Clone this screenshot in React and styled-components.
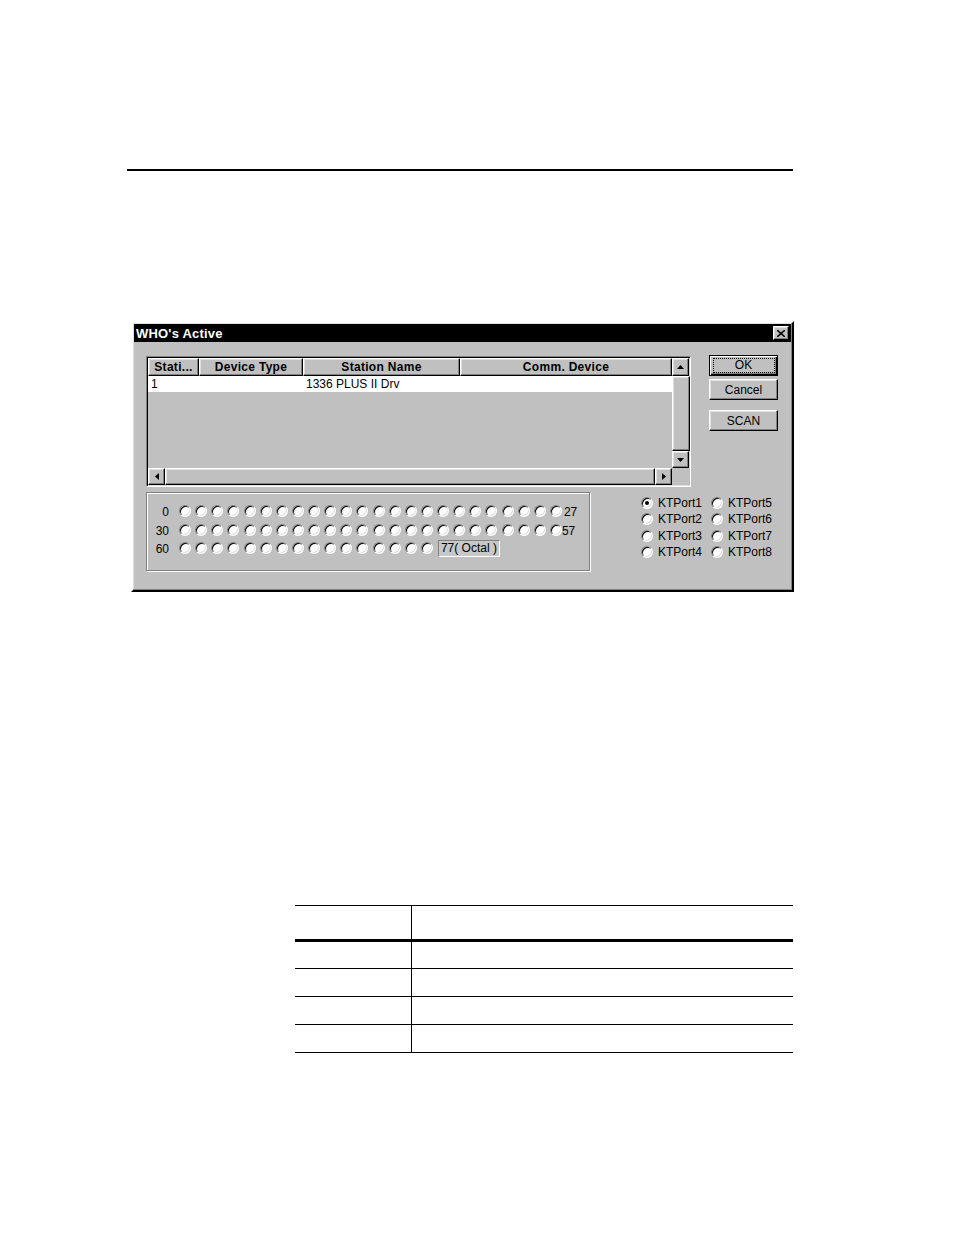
import React from "react";
import styled, { createGlobalStyle, css } from "styled-components";

const GlobalStyle = createGlobalStyle`
  html, body {
    margin: 0;
    padding: 0;
    background: #ffffff;
  }
  body {
    font-family: "Liberation Sans", Arial, sans-serif;
    font-size: 12px;
    color: #000;
  }
`;

const raised = css`
  border-style: solid;
  border-width: 1px;
  border-color: #ffffff #000000 #000000 #ffffff;
  box-shadow: inset -1px -1px #808080, inset 1px 1px #dfdfdf;
`;

const Page = styled.div`
  width: 954px;
  height: 1235px;
  padding-top: 169px;
  box-sizing: border-box;
  overflow: hidden;
`;

const Rule = styled.div`
  margin-left: 127px;
  width: 666px;
  height: 2px;
  background: #000;
`;

const Dialog = styled.div`
  margin-top: 150px;
  margin-left: 131px;
  width: 663px;
  height: 271px;
  box-sizing: border-box;
  background: #c0c0c0;
  padding: 1px;
  ${raised};
  border-width: 2px;
  display: flex;
  flex-direction: column;
`;

const TitleBar = styled.div`
  height: 18px;
  background: #000;
  color: #fff;
  display: flex;
  align-items: center;
  justify-content: space-between;
  padding: 0 2px 0 2px;
`;

const Title = styled.span`
  font-weight: bold;
  font-size: 13px;
  letter-spacing: 0.2px;
`;

const CloseButton = styled.div`
  width: 16px;
  height: 14px;
  box-sizing: border-box;
  background: #c0c0c0;
  ${raised};
  display: flex;
  align-items: center;
  justify-content: center;
`;

const Body = styled.div`
  padding: 14px 0 0 12px;
  display: flex;
  flex-direction: column;
`;

const TopRow = styled.div`
  display: flex;
  align-items: flex-start;
`;

const ListFrame = styled.div`
  width: 545px;
  height: 131px;
  box-sizing: border-box;
  border-style: solid;
  border-width: 1px;
  border-color: #808080 #ffffff #ffffff #808080;
  box-shadow: inset 1px 1px #000, inset -1px -1px #dfdfdf;
  padding: 1px;
  background: #c0c0c0;
  display: grid;
  grid-template-columns: 524px 18px;
  grid-template-rows: 110px 17px;
`;

const ListContent = styled.div`
  display: flex;
  flex-direction: column;
  overflow: hidden;
`;

const HeaderRow = styled.div`
  display: flex;
  height: 18px;
`;

const HeaderCell = styled.div`
  width: ${(p) => p.$w}px;
  box-sizing: border-box;
  ${raised};
  background: #c0c0c0;
  font-weight: bold;
  font-size: 12px;
  display: flex;
  align-items: center;
  justify-content: center;
  white-space: nowrap;
  overflow: hidden;
  letter-spacing: 0.3px;
`;

const DataRow = styled.div`
  display: flex;
  height: 16px;
  background: #fff;
`;

const DataCell = styled.div`
  width: ${(p) => p.$w}px;
  padding-left: 3px;
  box-sizing: border-box;
  line-height: 16px;
  white-space: nowrap;
`;

const ScrollButton = styled.div`
  width: ${(p) => p.$w || 17}px;
  height: ${(p) => p.$h || 17}px;
  flex: none;
  box-sizing: border-box;
  background: #c0c0c0;
  ${raised};
  display: flex;
  align-items: center;
  justify-content: center;
`;

const VScroll = styled.div`
  display: flex;
  flex-direction: column;
  background: #d0d0d0;
`;

const HScroll = styled.div`
  display: flex;
  background: #d0d0d0;
`;

const Thumb = styled.div`
  flex: 1;
  box-sizing: border-box;
  background: #c0c0c0;
  ${raised};
`;

const Corner = styled.div`
  background: #c0c0c0;
`;

const ButtonColumn = styled.div`
  margin-left: 18px;
  margin-top: -1px;
  display: flex;
  flex-direction: column;
`;

const Button = styled.div`
  width: 69px;
  height: 21px;
  box-sizing: border-box;
  background: #c0c0c0;
  ${raised};
  display: flex;
  align-items: center;
  justify-content: center;
  margin-bottom: ${(p) => p.$gap || 0}px;
  ${(p) =>
    p.$default &&
    css`
      border: 1px solid #000;
      box-shadow: inset 1px 1px #fff, inset -1px -1px #000,
        inset -2px -2px #808080;
    `}
`;

const FocusText = styled.span`
  display: inline-block;
  width: 60px;
  height: 13px;
  line-height: 13px;
  text-align: center;
  border: 1px dotted #000;
`;

const BottomRow = styled.div`
  display: flex;
  margin-top: 5px;
  align-items: flex-start;
`;

const GroupBox = styled.div`
  width: 444px;
  height: 79px;
  box-sizing: border-box;
  border: 1px solid #808080;
  box-shadow: inset 1px 1px #fff, 1px 1px #fff;
  padding: 12px 0 0 1px;
  display: flex;
  flex-direction: column;
  gap: 6.5px;
`;

const StationRow = styled.div`
  display: flex;
  align-items: center;
  height: 12px;
`;

const RowLabel = styled.span`
  width: 21px;
  text-align: right;
  margin-right: 10px;
  line-height: 12px;
  padding-top: 2px;
`;

const Radios = styled.div`
  display: flex;
  gap: 4.13px;
`;

const Radio = styled.span`
  display: inline-block;
  width: 12px;
  height: 12px;
  flex: none;
  box-sizing: border-box;
  border-radius: 50%;
  border: 1px solid;
  border-color: #808080 #ffffff #ffffff #808080;
  box-shadow: inset 1px 1px #000, inset -1px -1px #dfdfdf;
  background: #fff;
  position: relative;
  ${(p) =>
    p.$checked &&
    css`
      &::after {
        content: "";
        position: absolute;
        left: 3px;
        top: 3px;
        width: 4px;
        height: 4px;
        border-radius: 50%;
        background: #000;
      }
    `}
`;

const EndLabel = styled.span`
  margin-left: ${(p) => p.$gap}px;
  line-height: 12px;
  padding-top: 2px;
`;

const OctalBox = styled.span`
  margin-left: 5px;
  height: 17px;
  padding: 0 2px;
  box-sizing: border-box;
  border: 1px solid;
  border-color: #808080 #ffffff #ffffff #808080;
  background: #c8c8c8;
  line-height: 15px;
`;

const PortGrid = styled.div`
  margin-left: 51px;
  margin-top: 3px;
  display: grid;
  grid-template-columns: 70px 70px;
  grid-auto-flow: column;
  grid-template-rows: repeat(4, 16.3px);
`;

const Port = styled.label`
  display: flex;
  align-items: center;
  gap: 5px;
  white-space: nowrap;
`;

const Table = styled.div`
  margin-top: 313px;
  margin-left: 295px;
  width: 498px;
  border-top: 1px solid #000;
`;

const TableRow = styled.div`
  display: grid;
  grid-template-columns: 117px 1fr;
  height: ${(p) => p.$h}px;
  border-bottom: ${(p) => p.$b}px solid #000;
  box-sizing: border-box;
`;

const TableCell = styled.div`
  border-right: ${(p) => (p.$first ? "1px solid #000" : "none")};
`;

const Arrow = ({ dir }) => {
  const pts = {
    up: "0,4 7,4 3.5,0",
    down: "0,0 7,0 3.5,4",
    left: "4,0 4,7 0,3.5",
    right: "0,0 0,7 4,3.5",
  }[dir];
  const vertical = dir === "up" || dir === "down";
  return (
    <svg width={vertical ? 7 : 4} height={vertical ? 4 : 7}>
      <polygon points={pts} fill="#000" />
    </svg>
  );
};

const columns = [
  { title: "Stati...", w: 51 },
  { title: "Device Type", w: 104 },
  { title: "Station Name", w: 157 },
  { title: "Comm. Device", w: 212 },
];

const tableRows = [
  { h: 36, b: 3 },
  { h: 27, b: 1 },
  { h: 28, b: 1 },
  { h: 28, b: 1 },
  { h: 28, b: 1 },
];

const App = () => {
  const row = (n) => Array.from({ length: n }, (_, i) => <Radio key={i} />);
  return (
    <Page>
      <GlobalStyle />
      <Rule />
      <Dialog>
        <TitleBar>
          <Title>WHO's Active</Title>
          <CloseButton>
            <svg width="8" height="7" viewBox="0 0 8 7">
              <path d="M0 0 L8 7 M8 0 L0 7" stroke="#000" strokeWidth="1.6" />
            </svg>
          </CloseButton>
        </TitleBar>
        <Body>
          <TopRow>
            <ListFrame>
              <ListContent>
                <HeaderRow>
                  {columns.map((c) => (
                    <HeaderCell key={c.title} $w={c.w}>
                      {c.title}
                    </HeaderCell>
                  ))}
                </HeaderRow>
                <DataRow>
                  <DataCell $w={155}>1</DataCell>
                  <DataCell $w={369}>1336 PLUS II Drv</DataCell>
                </DataRow>
              </ListContent>
              <VScroll>
                <ScrollButton $h={18}>
                  <Arrow dir="up" />
                </ScrollButton>
                <Thumb />
                <ScrollButton>
                  <Arrow dir="down" />
                </ScrollButton>
              </VScroll>
              <HScroll>
                <ScrollButton>
                  <Arrow dir="left" />
                </ScrollButton>
                <Thumb />
                <ScrollButton>
                  <Arrow dir="right" />
                </ScrollButton>
              </HScroll>
              <Corner />
            </ListFrame>
            <ButtonColumn>
              <Button $default $gap={3}>
                <FocusText>OK</FocusText>
              </Button>
              <Button $gap={10}>Cancel</Button>
              <Button>SCAN</Button>
            </ButtonColumn>
          </TopRow>
          <BottomRow>
            <GroupBox>
              <StationRow>
                <RowLabel>0</RowLabel>
                <Radios>{row(24)}</Radios>
                <EndLabel $gap={2}>27</EndLabel>
              </StationRow>
              <StationRow>
                <RowLabel>30</RowLabel>
                <Radios>{row(24)}</Radios>
                <EndLabel $gap={0}>57</EndLabel>
              </StationRow>
              <StationRow>
                <RowLabel>60</RowLabel>
                <Radios>{row(16)}</Radios>
                <OctalBox>77( Octal )</OctalBox>
              </StationRow>
            </GroupBox>
            <PortGrid>
              {[1, 2, 3, 4, 5, 6, 7, 8].map((n) => (
                <Port key={n}>
                  <Radio $checked={n === 1} />
                  KTPort{n}
                </Port>
              ))}
            </PortGrid>
          </BottomRow>
        </Body>
      </Dialog>
      <Table>
        {tableRows.map((r, i) => (
          <TableRow key={i} $h={r.h} $b={r.b}>
            <TableCell $first />
            <TableCell />
          </TableRow>
        ))}
      </Table>
    </Page>
  );
};

export default App;
